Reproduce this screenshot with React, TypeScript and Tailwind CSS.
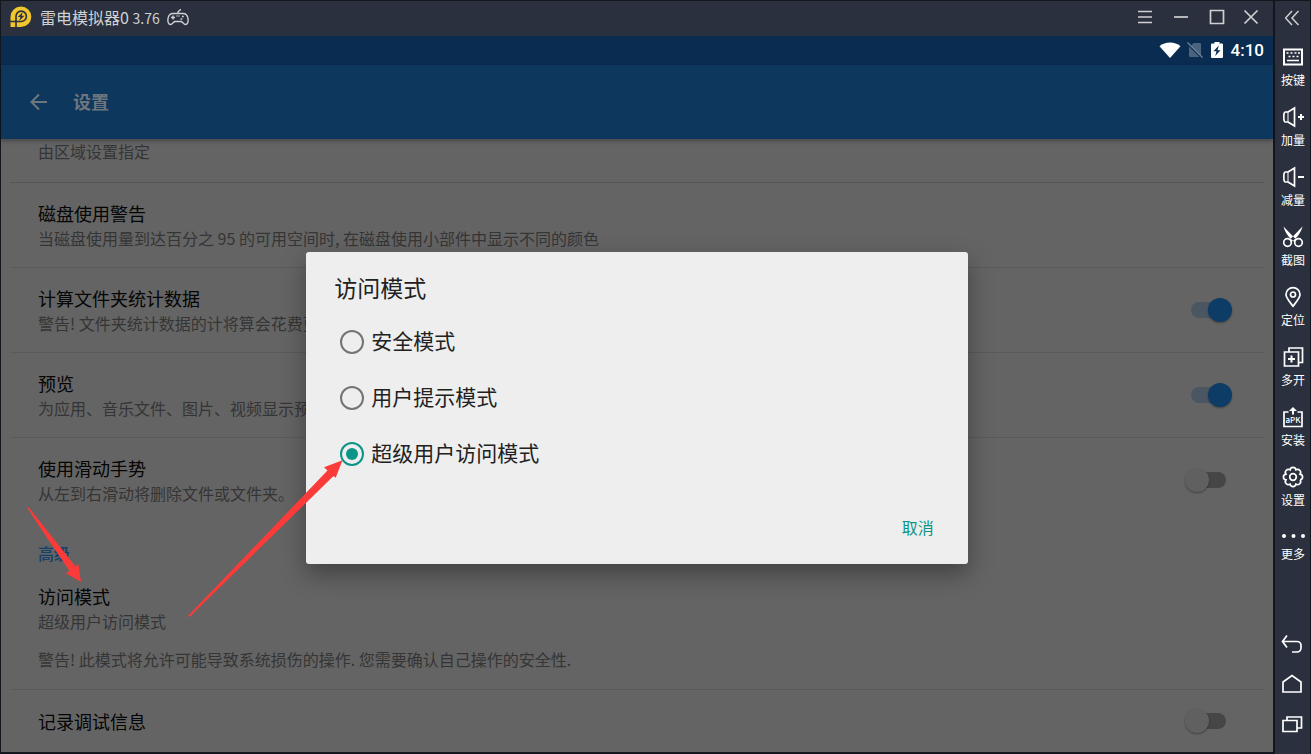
import { useState } from "react";
import type { ReactNode } from "react";

// ─── Data ─────────────────────────────────────────────────────────────────────

const MODES = ["安全模式", "用户提示模式", "超级用户访问模式"];

const SETTINGS = [
  {
    id: "disk",
    title: "磁盘使用警告",
    desc: "当磁盘使用量到达百分之 95 的可用空间时, 在磁盘使用小部件中显示不同的颜色",
  },
  { id: "stats", title: "计算文件夹统计数据", desc: "警告! 文件夹统计数据的计将算会花费更多时间", on: true },
  { id: "preview", title: "预览", desc: "为应用、音乐文件、图片、视频显示预览图", on: true },
  { id: "gesture", title: "使用滑动手势", desc: "从左到右滑动将删除文件或文件夹。", on: false },
];

// eight round lobes for the gear outline
const GEAR_PATH = Array.from({ length: 9 }, (_, i) => {
  const a = ((i * 45 + 22.5) * Math.PI) / 180;
  const point = `${(12 + 7.7 * Math.cos(a)).toFixed(2)} ${(10 + 7.7 * Math.sin(a)).toFixed(2)}`;
  return i === 0 ? `M${point}` : `A3 3 0 0 1 ${point}`;
}).join("");

const SPEAKER = (
  <>
    <path d="M7 5H4.5C3 5 2.8 7 2.8 10s.2 5 1.7 5H7" />
    <path d="M7 5v10" strokeWidth="1" />
    <path d="M7 5l6.5-4v18L7 15" />
  </>
);

const TOOLS: { label: string; icon: ReactNode }[] = [
  {
    label: "按键",
    icon: (
      <>
        <path d="M3 2.5h18v15H3z" strokeWidth="2" />
        <path d="M5.5 6h2M9.5 6h2M13.5 6h2M17 6h2M7.5 9.5h2M11.5 9.5h2M15.5 9.5h2M6 13.5h12" />
      </>
    ),
  },
  { label: "加量", icon: <>{SPEAKER}<path d="M17 10h6M20 7v6" strokeWidth="2" /></> },
  { label: "减量", icon: <>{SPEAKER}<path d="M17 10h6" strokeWidth="2" /></> },
  {
    label: "截图",
    icon: (
      <>
        <circle cx="6.5" cy="15.5" r="3.8" />
        <circle cx="17.5" cy="15.5" r="3.8" />
        <path d="M2.5-.5L15.5 13l-2 2C7.5 10.5 4 5.5 2.5-.5zM21.5-.5L8.5 13l2 2C16.5 10.5 20 5.5 21.5-.5z" fill="currentColor" stroke="none" />
      </>
    ),
  },
  {
    label: "定位",
    icon: (
      <>
        <path d="M12 19.2C8.5 14.5 5 11 5 7.5a7 6.8 0 0 1 14 0c0 3.5-3.5 7-7 11.700z" />
        <circle cx="12" cy="7.5" r="2.5" />
      </>
    ),
  },
  {
    label: "多开",
    icon: (
      <>
        <path d="M3.5 5h14v14h-14zM8 4.5V1h13.5v14.500H18" />
        <path d="M10.5 8.5v7M7 12h7" strokeWidth="2" />
      </>
    ),
  },
  {
    label: "安装",
    icon: (
      <>
        <path d="M7.5 5H3v14.5h18V5h-4.500" />
        <path d="M12 7.5V3" strokeWidth="2" />
        <path d="M8 4l4-4 4 4z" fill="currentColor" stroke="none" />
        <text x="12" y="16" textAnchor="middle" fontSize="8" fontWeight="500" fill="currentColor" stroke="none">
          aPK
        </text>
      </>
    ),
  },
  { label: "设置", icon: <><path d={GEAR_PATH} /><circle cx="12" cy="10" r="3.3" /></> },
];

// ─── Small pieces ─────────────────────────────────────────────────────────────

function ToolIcon({ children }: { children: ReactNode }) {
  return (
    <svg className="h-5 w-6 overflow-visible" viewBox="0 0 24 20" fill="none" stroke="currentColor" strokeWidth="1.7">
      {children}
    </svg>
  );
}

function WindowButton({ label, className, d }: { label: string; className: string; d: string }) {
  return (
    <button aria-label={label} className={`flex h-full items-center justify-center ${className}`}>
      <svg className="h-4 w-4" viewBox="0 0 16 16" fill="none" stroke="currentColor" strokeWidth="1.7">
        <path d={d} />
      </svg>
    </button>
  );
}

function Toggle({ id, on }: { id: string; on: boolean }) {
  return (
    <input
      id={id}
      type="checkbox"
      defaultChecked={on}
      className="relative h-6 w-12 shrink-0 appearance-none before:absolute before:top-1 before:right-[6px] before:left-[7px] before:h-4 before:rounded-full before:bg-[#464646] after:absolute after:top-0 after:left-px after:h-6 after:w-6 after:rounded-full after:bg-[#606060] after:shadow-[0_1px_2px_rgba(0,0,0,0.35)] checked:before:bg-[#4a5763] checked:after:left-6 checked:after:bg-[#0d3c66]"
    />
  );
}

function ItemText({ htmlFor, title, desc }: { htmlFor?: string; title: string; desc?: string }) {
  return (
    <div className="min-w-0 flex-1 whitespace-nowrap">
      {htmlFor ? (
        <label htmlFor={htmlFor} className="block text-[18px] leading-[26px] text-[#050505]">
          {title}
        </label>
      ) : (
        <h3 className="text-[18px] leading-[26px] text-[#050505]">{title}</h3>
      )}
      {desc && <p className="text-base leading-6">{desc}</p>}
    </div>
  );
}

// ─── Panels ───────────────────────────────────────────────────────────────────

function TitleBar() {
  return (
    <header className="flex h-9 items-center border-t border-[#12161d] bg-[#2a303d] pr-[6px] pb-[3px] pl-[9px] text-[#cfd0d2]">
      <svg className="h-[22px] w-[22px]" viewBox="0 0 22 22" aria-label="雷电">
        <path d="M11 .5a10.3 10.3 0 1 1 0 20.6H.5V10.8A10.4 10.4 0 0 1 11 .5z" fill="#f0c52d" />
        <path d="M6 21.5V10.3a5.2 5.2 0 1 1 5.2 5.2H0" fill="none" stroke="#2a303d" strokeWidth="1.6" />
        <path d="M12.8 6l-5 5h2.7l-1.3 4 5.2-5.2h-2.8z" fill="#2a303d" />
      </svg>
      <h1 className="ml-2 text-base leading-6">
        雷电模拟器0 <span className="text-sm">3.76</span>
      </h1>
      <svg className="ml-[6px] h-[18px] w-6" viewBox="0 0 24 18" fill="none" stroke="currentColor" strokeWidth="1.4">
        <path d="M7 5.5h10c3.2 0 4.5 2 5 5 .5 3.2-.4 6-2.6 6-2 0-2.2-2.5-4.4-3H9c-2.2.5-2.4 3-4.4 3-2.2 0-3.1-2.8-2.6-6 .5-3 1.8-5 5-5z" />
        <path d="M12 5.5V4c0-1.6 2.5-.8 2.5-3M7 7.5v4M5 9.5h4" />
        <path d="M16 8.5h1.8M14.5 11h1.8M10.5 8h1M12.5 8h1" />
      </svg>
      <div className="ml-auto flex h-full">
        <WindowButton label="菜单" className="w-9" d="M1 2.5h14M1 8h14M1 13.5h14" />
        <WindowButton label="最小化" className="w-9" d="M1 8h14" />
        <WindowButton label="最大化" className="w-9" d="M1.5 1.5h13v13h-13z" />
        <WindowButton label="关闭" className="w-8" d="M1.5 1.5l13 13M14.5 1.5l-13 13" />
      </div>
    </header>
  );
}

function StatusBar() {
  return (
    <div className="flex h-[29px] items-center justify-end bg-[#0a2c50] pr-[9px] pb-px text-white">
      <svg className="h-4 w-[22px]" viewBox="0 0 22 16" fill="currentColor">
        <path d="M.5 4.2C6-.8 16-.8 21.5 4.2L11 16z" />
      </svg>
      <svg className="ml-[6px] h-4 w-4" viewBox="0 0 16 16">
        <path d="M6.5 1H13a1 1 0 0 1 1 1v12L4 4zM2 4.5V14a1 1 0 0 0 1 1h9.500z" fill="#4a6480" />
        <path d="M.5.5l15 15" stroke="#6f859b" strokeWidth="1.3" />
      </svg>
      <svg className="ml-2 h-[18px] w-3" viewBox="0 0 12 18">
        <path d="M3.5 1h5v1.5H11a1 1 0 0 1 1 1V16a1 1 0 0 1-1 1H1a1 1 0 0 1-1-1V3.5a1 1 0 0 1 1-1h2.500z" fill="currentColor" />
        <path d="M7.8 4.5L2.5 10.3h3L4.2 15l5.3-5.8h-3z" fill="#0a2c50" />
      </svg>
      <time className="ml-2 font-['Roboto','Noto_Sans_CJK_SC',sans-serif] text-[17px] leading-6 font-medium">4:10</time>
    </div>
  );
}

function SettingsList() {
  return (
    <div className="min-h-0 flex-1 overflow-hidden bg-[#646464] px-[9px] text-[#353535]">
      <p className="border-b border-[#575757] pb-[19px] pl-7 text-base leading-6">由区域设置指定</p>

      {SETTINGS.map((item) => (
        <div
          key={item.id}
          className="flex items-center border-b border-[#5a5a5a] py-[17px] pr-8 pl-7 last-of-type:border-transparent"
        >
          <ItemText htmlFor={item.on === undefined ? undefined : item.id} title={item.title} desc={item.desc} />
          {item.on !== undefined && <Toggle id={item.id} on={item.on} />}
        </div>
      ))}

      <h2 className="pt-[18px] pl-7 text-base leading-6 font-medium text-[#14406b]">高级</h2>
      <section className="border-b border-[#5a5a5a] pt-[18px] pb-[18px] pl-7">
        <ItemText title="访问模式" desc="超级用户访问模式" />
        <p className="mt-[14px] text-base leading-6">
          警告! 此模式将允许可能导致系统损伤的操作. 您需要确认自己操作的安全性.
        </p>
      </section>
      <section className="flex items-center pt-[18px] pr-8 pl-7">
        <ItemText htmlFor="debug" title="记录调试信息" />
        <Toggle id="debug" on={false} />
      </section>
    </div>
  );
}

function ModeDialog() {
  const [mode, setMode] = useState(MODES[2]);

  return (
    <div
      role="dialog"
      aria-labelledby="mode-title"
      className="w-[52%] rounded-[3px] bg-[#eeeeee] pt-[19px] pb-[19px] text-[#212121] shadow-[0_10px_24px_rgba(0,0,0,0.35)]"
    >
      <h2 id="mode-title" className="px-7 text-[23px] leading-8">
        访问模式
      </h2>
      <div className="mt-[11px] px-[34px]">
        {MODES.map((name) => (
          <label key={name} className="flex h-14 items-center gap-[7px] text-[21px] leading-8">
            <input
              type="radio"
              name="mode"
              checked={mode === name}
              onChange={() => setMode(name)}
              className="grid h-6 w-6 appearance-none place-content-center rounded-full border-[2px] border-[#747474] checked:border-[#0a9587] checked:before:h-3 checked:before:w-3 checked:before:rounded-full checked:before:bg-[#0a9587]"
            />
            <span className="pb-[3px]">{name}</span>
          </label>
        ))}
      </div>
      <div className="mt-[27px] flex justify-end pr-[18px]">
        <button className="h-9 px-4 text-base text-[#0a9587]">取消</button>
      </div>
    </div>
  );
}

function Sidebar() {
  return (
    <aside className="flex w-[38px] shrink-0 flex-col items-center border-t border-r border-l-2 border-[#12161d] bg-[#2a303d] text-white">
      <button aria-label="收起" className="flex h-[35px] items-center pb-[2px] text-[#cfd0d2]">
        <svg className="h-4 w-4" viewBox="0 0 16 16" fill="none" stroke="currentColor" strokeWidth="1.5">
          <path d="M7 1L.5 8 7 15M13.5 1L7 8l6.500 7" />
        </svg>
      </button>
      <nav className="mt-[11px] flex flex-col gap-[19px] pl-px">
        {TOOLS.map((tool) => (
          <button key={tool.label} className="flex flex-col items-center gap-[5px] text-xs leading-4">
            <ToolIcon>{tool.icon}</ToolIcon>
            {tool.label}
          </button>
        ))}
        <button className="flex flex-col items-center gap-[5px] text-xs leading-4">
          <svg className="h-[14px] w-6" viewBox="0 0 24 14" fill="currentColor">
            <circle cx="3" cy="9" r="2" />
            <circle cx="12.5" cy="9" r="2" />
            <circle cx="22" cy="9" r="2" />
          </svg>
          更多
        </button>
      </nav>
      <div className="mt-auto flex flex-col gap-5 pb-[20px]">
        <button aria-label="返回">
          <ToolIcon>
            <path d="M6 1.5L1.5 7.5 6 13.5M1.5 7.5H16a4 4 0 0 1 4 4V14a4 4 0 0 1-4 4h-5" />
          </ToolIcon>
        </button>
        <button aria-label="主页">
          <ToolIcon>
            <path d="M2 18V8l9-6.5L20 8v10z" />
          </ToolIcon>
        </button>
        <button aria-label="最近任务">
          <ToolIcon>
            <path d="M2 6.5h14v11H2zM6 6V3h14.5v11H16.5" />
          </ToolIcon>
        </button>
      </div>
    </aside>
  );
}

// ─── App ──────────────────────────────────────────────────────────────────────

export default function App() {
  return (
    <div className="relative flex h-screen overflow-hidden bg-[#12161d] font-['Noto_Sans_CJK_SC',sans-serif]">
      <div className="flex min-w-0 flex-1 flex-col border-l border-[#12161d] pb-[2px]">
        <TitleBar />
        <StatusBar />
        <main className="relative flex min-h-0 flex-1 flex-col">
          <div className="z-10 flex h-[74px] shrink-0 items-center gap-6 bg-[#0d375d] pl-7 text-[#6d767e] shadow-[0_2px_4px_rgba(0,0,0,0.3)]">
            <button aria-label="返回上级">
              <svg className="h-5 w-5" viewBox="0 0 20 20" fill="none" stroke="currentColor" strokeWidth="2">
                <path d="M18 10H3M10 2.5L2.5 10l7.5 7.500" />
              </svg>
            </button>
            <h2 className="pb-[2px] text-[18px] leading-[26px] font-bold">设置</h2>
          </div>
          <SettingsList />
          <div className="absolute inset-0 z-20 flex items-center justify-center pb-[2px]">
            <ModeDialog />
          </div>
        </main>
      </div>
      <Sidebar />

      {/* pointer arrows */}
      <svg className="pointer-events-none absolute top-[500px] left-0 z-30 h-[130px] w-[360px] overflow-visible" viewBox="0 500 360 130" fill="#fb3b3a">
        <path d="M28.5 507L75.5 566.5l2.8-2.5L81 582l-15.3-8.7 3.8-2.3C55 549 41 530 27.5 508z" />
        <path d="M188 616L327.5 470.5 324 467.3l18.5-7-6.8 17.4-2.2-1.7L189.500 617z" />
      </svg>
    </div>
  );
}
